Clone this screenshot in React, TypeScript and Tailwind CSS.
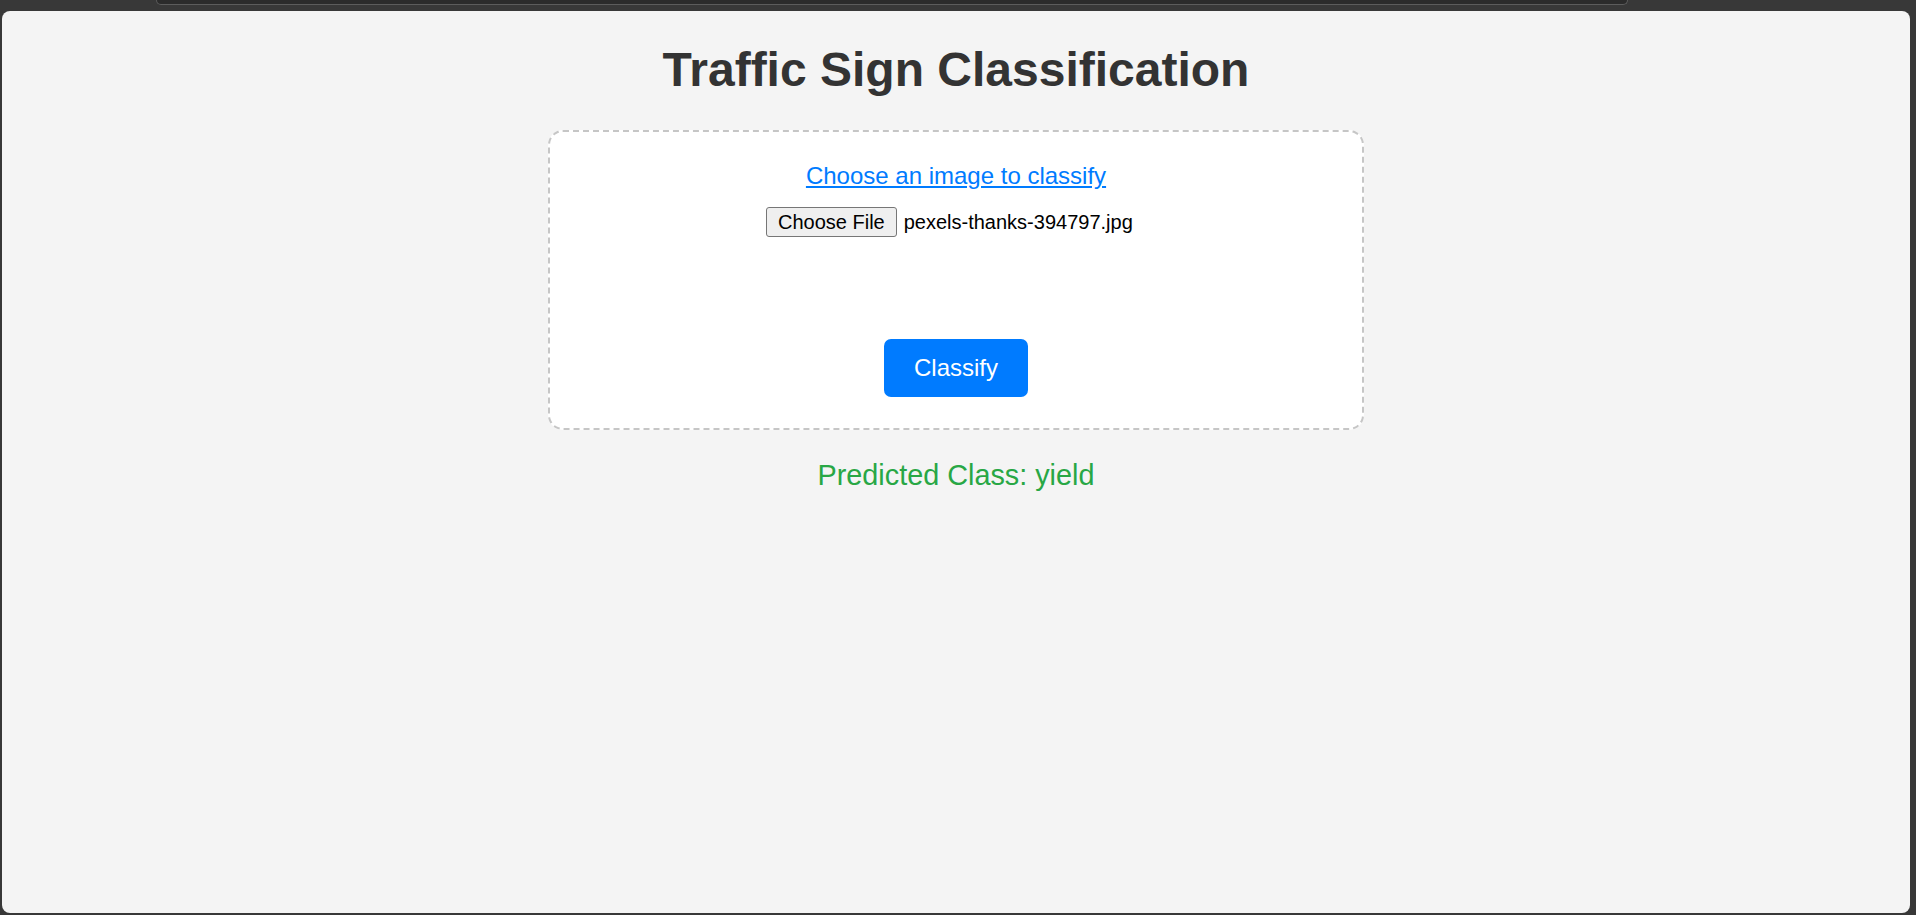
import React from 'react';

const App: React.FC = () => {
  const fileName = 'pexels-thanks-394797.jpg';
  const prediction = 'yield';

  return (
    <div className="h-[915px] bg-[#383838] flex flex-col font-['Liberation_Sans',Arial,sans-serif]">
      {/* browser chrome strip */}
      <div className="h-[11px] shrink-0 pl-[156px]">
        <div className="h-[5px] w-[1472px] rounded-b-[10px] border-x border-b border-[#5c5c5c] bg-[#2b2b2b]" />
      </div>

      <div className="flex-1 mb-[2px] ml-[2px] mr-[6px] rounded-[8px] bg-[#f4f4f4] flex flex-col items-center pt-[31px]">
        <h1 className="text-[48px] leading-[55px] font-bold text-[#333333]">Traffic Sign Classification</h1>

        <div className="mt-[33px] w-[816px] h-[300px] rounded-[15px] border-2 border-dashed border-[#c6c6c6] bg-white flex flex-col items-center pt-[30px]">
          <label className="text-[24px] leading-[28px] text-[#007bff] underline cursor-pointer">
            Choose an image to classify
          </label>

          <div className="mt-[17px] w-[380px] h-[30px] flex items-center">
            <button className="h-[30px] px-[11px] border border-[#767676] rounded-[3px] bg-[#efefef] text-[20px] leading-[22px] text-black">
              Choose File
            </button>
            <span className="ml-[7px] text-[20px] leading-[22px] text-black">{fileName}</span>
          </div>

          <button className="mt-[102px] h-[58px] w-[144px] rounded-[7px] bg-[#007bff] text-white text-[24px] leading-[28px]">
            Classify
          </button>
        </div>

        <p className="mt-[29px] text-[28.8px] leading-[33px] text-[#28a745]">Predicted Class: {prediction}</p>
      </div>
    </div>
  );
};

export default App;
